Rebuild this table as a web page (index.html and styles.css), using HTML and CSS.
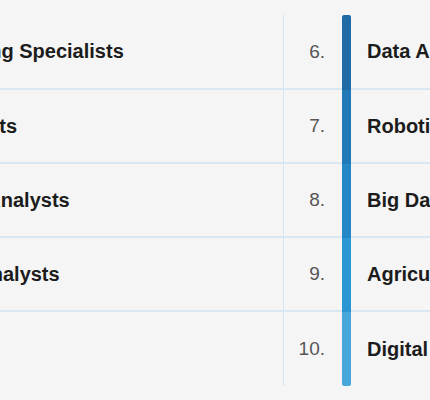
FILE: index.html
```html
<!DOCTYPE html>
<html lang="en">
<head>
<meta charset="utf-8">
<title>Top 10 fastest growing jobs</title>
<link rel="stylesheet" href="styles.css">
</head>
<body>
<div class="board">
  <ol class="half left">
    <li class="row"><span class="num">1.</span><span class="bar c1"></span><span class="label">AI and Machine Learning Specialists</span></li>
    <li class="row"><span class="num">2.</span><span class="bar c2"></span><span class="label">Sustainability Specialists</span></li>
    <li class="row"><span class="num">3.</span><span class="bar c3"></span><span class="label">Business Intelligence Analysts</span></li>
    <li class="row"><span class="num">4.</span><span class="bar c4"></span><span class="label">Information Security Analysts</span></li>
    <li class="row"><span class="num">5.</span><span class="bar c5"></span><span class="label">Fintech Engineers</span></li>
  </ol>
  <ol class="half right">
    <li class="row"><span class="num">6.</span><span class="bar c1"></span><span class="label">Data Analysts and Scientists</span></li>
    <li class="row"><span class="num">7.</span><span class="bar c2"></span><span class="label">Robotics Engineers</span></li>
    <li class="row"><span class="num">8.</span><span class="bar c3"></span><span class="label">Big Data Specialists</span></li>
    <li class="row"><span class="num">9.</span><span class="bar c4"></span><span class="label">Agricultural Equipment Operators</span></li>
    <li class="row"><span class="num">10.</span><span class="bar c5"></span><span class="label">Digital Transformation Specialists</span></li>
  </ol>
</div>
</body>
</html>
```
FILE: styles.css
```css
html, body {
  margin: 0;
  padding: 0;
  background: #f5f5f5;
  overflow: hidden;
  width: 430px;
  height: 400px;
}

body {
  font-family: "Liberation Sans", Arial, Helvetica, sans-serif;
}

.board {
  display: flex;
  margin-left: -304px;
  padding-top: 15px;
  width: 1200px;
}

.half {
  list-style: none;
  margin: 0;
  padding: 0;
  width: 587px;
  flex: none;
  display: flex;
  flex-direction: column;
}

.right {
  border-left: 1px solid #d4e5f2;
}

.row {
  display: grid;
  grid-template-columns: 59px 9px 1fr;
  height: 74px;
  box-sizing: border-box;
  border-bottom: 2px solid #d9e7f3;
}

.row:first-child {
  height: 75px;
}

.row:last-child {
  border-bottom: none;
  height: 74px;
}

.right .row {
  grid-template-columns: 58px 9px 1fr;
}

.num {
  align-self: center;
  justify-self: end;
  padding-right: 17px;
  font-size: 19px;
  color: #555555;
}

.bar {
  margin-bottom: -2px;
  position: relative;
  z-index: 1;
}

.row:last-child .bar {
  margin-bottom: 0;
  border-radius: 0 0 2px 2px;
}

.row:first-child .bar {
  border-radius: 2px 2px 0 0;
}

.label {
  align-self: center;
  padding-left: 16px;
  font-size: 20px;
  font-weight: 700;
  color: #1c1c1c;
  white-space: nowrap;
  overflow: hidden;
}

.left .label {
  padding-left: 13px;
}

.c1 { background: #1f6ba6; }
.c2 { background: #2279b7; }
.c3 { background: #2687c6; }
.c4 { background: #2b96d3; }
.c5 { background: #47a7dd; }
```
